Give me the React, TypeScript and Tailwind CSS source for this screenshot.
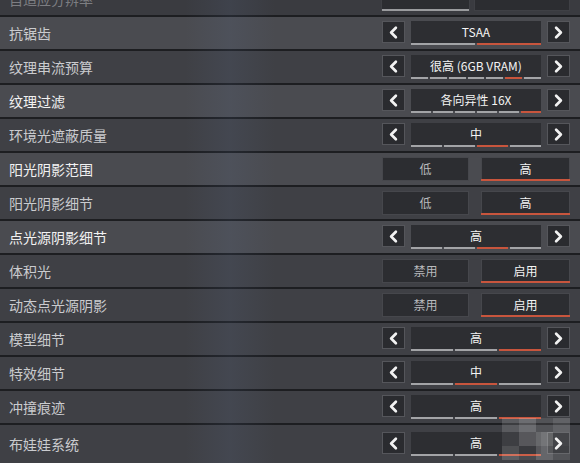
import { ChevronLeft, ChevronRight } from 'lucide-react';

type Row =
  | { label: string; kind: 'cycle'; value: string; segs: number; active: number; hi?: boolean; bright?: boolean }
  | { label: string; kind: 'pair'; options: [string, string]; active: number; hi?: boolean; bright?: boolean };

const rows: Row[] = [
  { label: '抗锯齿', kind: 'cycle', value: 'TSAA', segs: 2, active: 1, hi: true },
  { label: '纹理串流预算', kind: 'cycle', value: '很高 (6GB VRAM)', segs: 7, active: 5 },
  { label: '纹理过滤', kind: 'cycle', value: '各向异性 16X', segs: 6, active: 5, hi: true, bright: true },
  { label: '环境光遮蔽质量', kind: 'cycle', value: '中', segs: 4, active: 2 },
  { label: '阳光阴影范围', kind: 'pair', options: ['低', '高'], active: 1, hi: true, bright: true },
  { label: '阳光阴影细节', kind: 'pair', options: ['低', '高'], active: 1 },
  { label: '点光源阴影细节', kind: 'cycle', value: '高', segs: 4, active: 2, hi: true, bright: true },
  { label: '体积光', kind: 'pair', options: ['禁用', '启用'], active: 1 },
  { label: '动态点光源阴影', kind: 'pair', options: ['禁用', '启用'], active: 1 },
  { label: '模型细节', kind: 'cycle', value: '高', segs: 3, active: 2 },
  { label: '特效细节', kind: 'cycle', value: '中', segs: 3, active: 1 },
  { label: '冲撞痕迹', kind: 'cycle', value: '高', segs: 3, active: 2 },
  { label: '布娃娃系统', kind: 'cycle', value: '高', segs: 3, active: 2 },
];

const font = { fontFamily: '"Noto Sans CJK SC", "Noto Sans", sans-serif' };

function ArrowBox({ dir }: { dir: 'left' | 'right' }) {
  return (
    <div className="w-[23px] h-[22px] bg-[#2a2b2f] border border-[#55565b] flex items-center justify-center text-[#f2f2f2]">
      {dir === 'left' ? <ChevronLeft size={19} strokeWidth={3.4} /> : <ChevronRight size={19} strokeWidth={3.4} />}
    </div>
  );
}

function Cycle({ value, segs, active }: { value: string; segs: number; active: number }) {
  return (
    <div className="flex items-start gap-[6px]">
      <ArrowBox dir="left" />
      <div className="w-[130px] flex flex-col">
        <div className="h-[22px] bg-[#2d2e32] flex items-center justify-center text-[12px] text-[#f4f4f4]">
          {value}
        </div>
        <div className="flex gap-[2px] h-[2px]">
          {Array.from({ length: segs }).map((_, i) => (
            <div key={i} className={'flex-1 ' + (i === active ? 'bg-[#c8553d]' : 'bg-[#a3a4a7]')} />
          ))}
        </div>
      </div>
      <ArrowBox dir="right" />
    </div>
  );
}

function Pair({ options, active }: { options: [string, string]; active: number }) {
  return (
    <div className="flex gap-[12px]">
      {options.map((o, i) => (
        <div
          key={o}
          className={
            'relative h-[24px] bg-[#2c2d31] border border-[#46474c] flex items-center justify-center text-[12px] ' +
            (i === 0 ? 'w-[87px] ' : 'w-[89px] ') +
            (i === active ? 'text-[#f4f4f4]' : 'text-[#b9babd]')
          }
        >
          {o}
          {i === active && <div className="absolute left-[-1px] right-[-1px] bottom-[-1px] h-[2px] bg-[#c8553d]" />}
        </div>
      ))}
    </div>
  );
}

export default function App() {
  return (
    <div className="relative w-[580px] h-[463px] overflow-hidden bg-[#1d1e21] flex flex-col gap-[2px]" style={font}>
      {/* cut-off row above */}
      <div className="shrink-0 h-[32px] -mt-[17px] bg-[#3a3b40] flex items-center justify-between pl-[9px] pr-[10px]">
        <span className="text-[14px] text-[#7d7e82]">自适应分辨率</span>
        <div className="flex gap-[4px]">
          <div className="relative w-[89px] h-[24px] bg-[#2c2d31] border border-[#3f4045]">
            <div className="absolute left-0 right-0 bottom-[-1px] h-[2px] bg-[#9a9b9e]" />
          </div>
          <div className="w-[96px] h-[24px] bg-[#2c2d31] border border-[#3f4045]" />
        </div>
      </div>

      {rows.map((r, idx) => (
        <div
          key={r.label}
          className={
            'shrink-0 h-[32px] flex items-center justify-between pl-[9px] pr-[10px] ' +
            (idx === rows.length - 1 ? 'flex-1 ' : '') +
            (r.hi ? 'bg-[#4a4b50]' : 'bg-[#3f4045]')
          }
        >
          <span className={'text-[14px] ' + (r.bright ? 'text-[#f2f2f2]' : 'text-[#cacbce]')}>{r.label}</span>
          {r.kind === 'cycle' ? (
            <Cycle value={r.value} segs={r.segs} active={r.active} />
          ) : (
            <Pair options={r.options} active={r.active} />
          )}
        </div>
      ))}

      {/* faint blue light band behind the panel */}
      <div className="pointer-events-none absolute top-0 bottom-0 left-[185px] w-[90px] bg-gradient-to-r from-transparent via-[#6b86b8]/10 to-transparent" />

      {/* mosaic watermark */}
      <div className="pointer-events-none absolute left-[502px] top-[418px] grid grid-cols-4 gap-0">
        {[0.14, 0.24, 0.1, 0.18, 0.08, 0.2, 0.28, 0.12, 0.16, 0.06, 0.2, 0.1].map((o, i) => (
          <div key={i} className="w-[17px] h-[14px] bg-white" style={{ opacity: o }} />
        ))}
      </div>
    </div>
  );
}
